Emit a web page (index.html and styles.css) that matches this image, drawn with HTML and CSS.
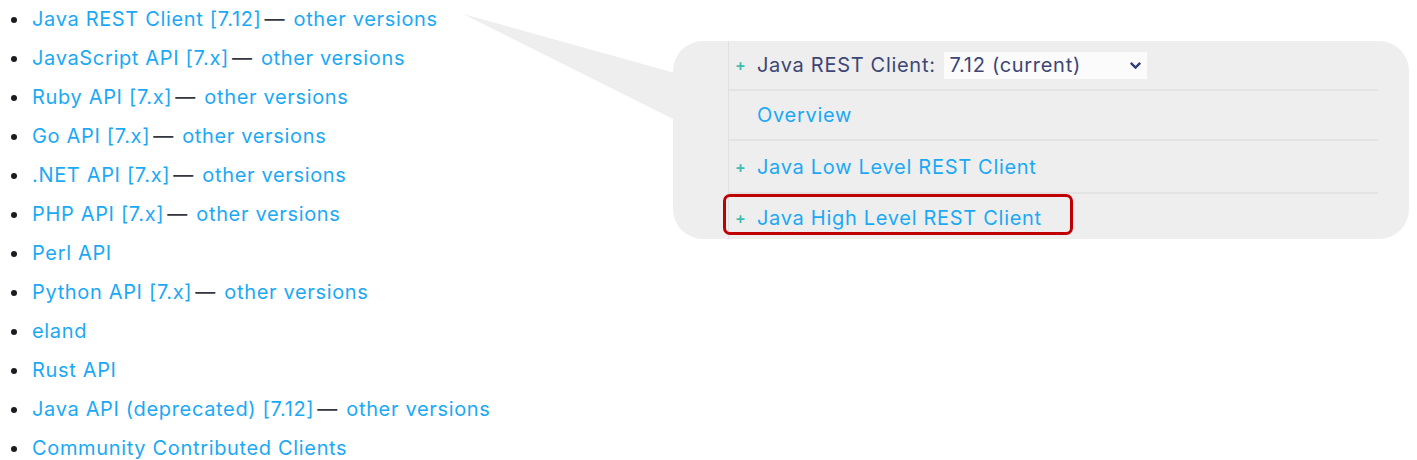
FILE: index.html
```html
<!DOCTYPE html>
<html>
<head>
<meta charset="utf-8">
<link rel="stylesheet" href="styles.css">
</head>
<body>
<ul class="clients">
  <li><a href="#">Java REST Client [7.12]</a><span class="dash">—</span><a href="#">other versions</a></li>
  <li><a href="#">JavaScript API [7.x]</a><span class="dash">—</span><a href="#">other versions</a></li>
  <li><a href="#">Ruby API [7.x]</a><span class="dash">—</span><a href="#">other versions</a></li>
  <li><a href="#">Go API [7.x]</a><span class="dash">—</span><a href="#">other versions</a></li>
  <li><a href="#">.NET API [7.x]</a><span class="dash">—</span><a href="#">other versions</a></li>
  <li><a href="#">PHP API [7.x]</a><span class="dash">—</span><a href="#">other versions</a></li>
  <li><a href="#">Perl API</a></li>
  <li><a href="#">Python API [7.x]</a><span class="dash">—</span><a href="#">other versions</a></li>
  <li><a href="#">eland</a></li>
  <li><a href="#">Rust API</a></li>
  <li><a href="#">Java API (deprecated) [7.12]</a><span class="dash">—</span><a href="#">other versions</a></li>
  <li><a href="#">Community Contributed Clients</a></li>
</ul>

<svg class="pointer" width="220" height="120" viewBox="0 0 220 120">
  <polygon points="0,0 212,59 212,106" fill="#eeeeee"/>
</svg>

<div class="callout">
  <ul class="toc">
    <li class="row">
      <span class="plus">+</span>
      <span class="title">Java REST Client:</span>
      <span class="select">7.12 (current)
        <svg class="chev" width="13" height="9" viewBox="0 0 13 9"><path d="M1.8 1.8 L6.5 6.5 L11.2 1.8" fill="none" stroke="#2f3d7a" stroke-width="2.4"/></svg>
      </span>
    </li>
    <li class="row"><span class="plus blank"></span><a href="#">Overview</a></li>
    <li class="row"><span class="plus">+</span><a href="#">Java Low Level REST Client</a></li>
    <li class="row last"><span class="plus">+</span><a href="#">Java High Level REST Client</a></li>
  </ul>
  <div class="highlight"></div>
</div>
</body>
</html>
```

FILE: styles.css
```css
html, body {
  margin: 0;
  padding: 0;
  background: #ffffff;
}
body {
  font-family: "Inter", "Noto Sans", sans-serif;
  font-size: 20px;
  letter-spacing: 0.66px;
  color: #343741;
  width: 1417px;
  height: 460px;
  overflow: hidden;
  position: relative;
}
a {
  color: #1ba9f5;
  text-decoration: none;
}
.clients {
  list-style: none;
  margin: 0;
  padding: 0 0 0 32px;
}
.clients li {
  position: relative;
  line-height: 39px;
  height: 39px;
  white-space: nowrap;
}
.clients li::before {
  content: "";
  position: absolute;
  left: -21px;
  top: 17px;
  width: 6px;
  height: 6px;
  border-radius: 50%;
  background: #1a1c21;
}
.dash {
  color: #343741;
  letter-spacing: 0;
  margin: 0 9px 0 3px;
}
.pointer {
  position: absolute;
  left: 463px;
  top: 14px;
}
.callout {
  position: absolute;
  left: 673px;
  top: 41px;
  width: 736px;
  height: 198px;
  background: #eeeeee;
  border-radius: 30px;
}
.toc {
  list-style: none;
  margin: 0 0 0 55px;
  padding: 0;
  width: 650px;
  height: 198px;
  border-left: 1px solid #e0e0e0;
  box-sizing: border-box;
  letter-spacing: 0.7px;
}
.row {
  display: flex;
  align-items: center;
  height: 50px;
  border-bottom: 2px solid #e3e3e3;
  box-sizing: border-box;
  line-height: 24px;
}
.row:nth-child(3) {
  height: 53px;
}
.row.last {
  border-bottom: none;
  height: 45px;
  padding-top: 3px;
}
.plus {
  width: 28px;
  padding-left: 6px;
  box-sizing: border-box;
  color: #3ebeb0;
  font-size: 16px;
  font-weight: 600;
}
.title {
  color: #3d4674;
  margin-right: 8px;
}
.select {
  display: flex;
  align-items: center;
  justify-content: space-between;
  width: 203px;
  height: 27px;
  padding: 0 5px 0 6px;
  box-sizing: border-box;
  background: #fbfbfb;
  color: #3d4674;
}
.highlight {
  position: absolute;
  left: 50px;
  top: 153px;
  width: 350px;
  height: 41px;
  border: 3px solid #c00000;
  border-radius: 7px;
  box-sizing: border-box;
}
```
